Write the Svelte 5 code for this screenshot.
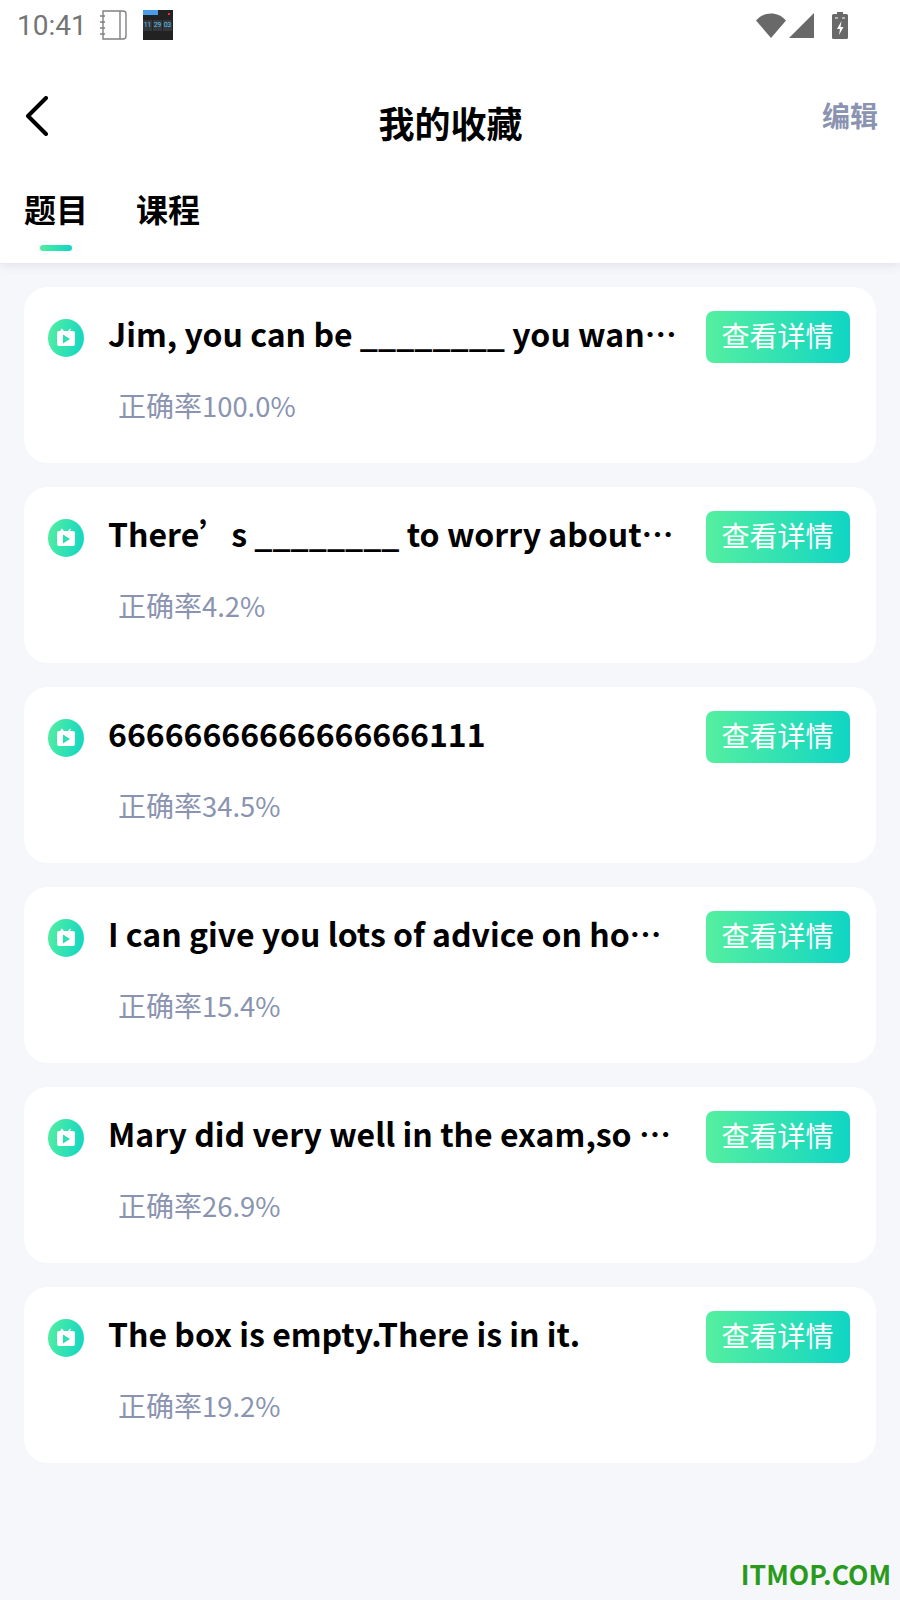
<script>
  const items = [
    { title: 'Jim, you can be ________ you want to be when you grow up.', rate: '100.0%' },
    { title: 'There’s ________ to worry about, everything is fine.', rate: '4.2%' },
    { title: '66666666666666666111', rate: '34.5%' },
    { title: 'I can give you lots of advice on how to learn English.', rate: '15.4%' },
    { title: 'Mary did very well in the exam,so her parents are happy.', rate: '26.9%' },
    { title: 'The box is empty.There is in it.', rate: '19.2%' }
  ];
</script>

<div class="page">
  <header class="top">
    <div class="status">
      <span class="time">10:41</span>
      <svg class="note" width="28" height="30" viewBox="0 0 28 30" fill="none" stroke="#808080" stroke-width="1.4">
        <path d="M3 1h20a3 3 0 0 1 3 3v22a3 3 0 0 1-3 3H3z" />
        <path d="M20 1v28M0 6h5M0 12h5M0 18h5M0 24h5" />
      </svg>
      <div class="clock">
        <div class="clock-top"><span class="clock-tag"></span><span class="clock-dot"></span></div>
        <div class="clock-nums"><span>11</span><span>29</span><span>03</span></div>
      </div>
      <div class="status-right">
        <svg width="30" height="26" viewBox="0 0 30 26"><path d="M0 8.500C8-1 22-1 30 8.500L15 26z" fill="#696969" /></svg>
        <svg width="25" height="25" viewBox="0 0 25 25"><path d="M25 0v25H0z" fill="#696969" /></svg>
        <svg class="battery" width="16" height="27" viewBox="0 0 16 27">
          <path d="M5 0h6v2h3.500a1.500 1.500 0 0 1 1.500 1.500v22a1.500 1.500 0 0 1-1.500 1.500h-13A1.500 1.500 0 0 1 0 25.500v-22A1.500 1.500 0 0 1 1.500 2H5z" fill="#696969" />
          <path d="M9.500 9l-4.500 8h3l-1 6 4.500-8H8.500z" fill="#fff" />
          <path d="M3 6h3M10 6h3" stroke="#fff" stroke-width="1.200" />
        </svg>
      </div>
    </div>

    <div class="nav">
      <svg class="back" width="24" height="40" viewBox="0 0 24 40" fill="none" stroke="#000" stroke-width="4" stroke-linecap="round" stroke-linejoin="round">
        <path d="M21 2L3 20l18 18" />
      </svg>
      <h1>我的收藏</h1>
      <span class="edit">编辑</span>
    </div>

    <div class="tabs">
      <div class="tab active">题目<i></i></div>
      <div class="tab">课程</div>
    </div>
  </header>

  <main class="list">
    {#each items as item}
      <section class="card">
        <div class="row">
          <span class="badge">
            <svg width="20" height="20" viewBox="0 0 20 20">
              <path d="M6 0.500l2 2.500h4l2-2.500 1 .8-1.400 1.700H17a2 2 0 0 1 2 2v11a2 2 0 0 1-2 2H3a2 2 0 0 1-2-2V5a2 2 0 0 1 2-2h1.400L5 1.300z" fill="#fff" />
              <path d="M7 6.500l7 4.500-7 4.500z" fill="#2adfb0" />
            </svg>
          </span>
          <span class="title">{item.title}</span>
          <button type="button" class="detail">查看详情</button>
        </div>
        <div class="rate">正确率<span class="pct">{item.rate}</span></div>
      </section>
    {/each}
  </main>

  <div class="mark">ITMOP.COM</div>
</div>

<style>
  :global(body) {
    margin: 0;
    background: #f5f7fb;
  }

  .page {
    position: relative;
    width: 900px;
    height: 1600px;
    overflow: hidden;
    background: #f5f7fb;
    font-family: "Noto Sans CJK SC", "Noto Sans", sans-serif;
  }

  .top {
    height: 263px;
    background: #fff;
    box-shadow: 0 2px 10px rgba(60, 70, 100, 0.12);
  }

  .status {
    display: flex;
    align-items: center;
    height: 50px;
    padding: 0 52px 0 17px;
  }

  .time {
    font-family: Roboto, sans-serif;
    font-size: 28px;
    color: #757575;
  }

  .note {
    margin-left: 13px;
  }

  .clock {
    display: flex;
    flex-direction: column;
    width: 30px;
    height: 30px;
    margin-left: 15px;
    background: #222;
  }

  .clock-top {
    display: flex;
    justify-content: space-between;
    align-items: flex-start;
    height: 10px;
  }

  .clock-tag {
    width: 15px;
    height: 5px;
    background: #4a9be8;
  }

  .clock-dot {
    width: 2px;
    height: 2px;
    margin: 3px 3px 0 0;
    background: #d33;
  }

  .clock-nums {
    display: flex;
    justify-content: space-between;
    font-family: Roboto, sans-serif;
    font-size: 7px;
    letter-spacing: -0.4px;
    line-height: 11px;
    color: #5cc4f0;
  }

  .clock-nums span {
    flex: 1;
    text-align: center;
    background: #33373b;
    margin-right: 1px;
  }

  .status-right {
    display: flex;
    align-items: center;
    gap: 3px;
    margin-left: auto;
  }

  .battery {
    margin-left: 15px;
  }

  .nav {
    display: grid;
    grid-template-columns: 1fr auto 1fr;
    align-items: center;
    height: 70px;
    padding: 0 24px 0 25px;
    margin-top: 37px;
  }

  .back {
    margin-top: -12px;
  }

  h1 {
    margin: 0;
    font-size: 36px;
    font-weight: 700;
    line-height: 50px;
    color: #000;
  }

  .edit {
    justify-self: end;
    font-size: 28px;
    font-weight: 700;
    line-height: 40px;
    color: #8a93b0;
    margin: -14px -2px 0 0;
  }

  .tabs {
    display: flex;
    gap: 48px;
    padding: 0 24px;
    margin-top: 28px;
  }

  .tab {
    position: relative;
    font-size: 32px;
    font-weight: 700;
    line-height: 46px;
    color: #000;
  }

  .tab i {
    position: absolute;
    left: 16px;
    top: 60px;
    width: 32px;
    height: 6px;
    border-radius: 3px;
    background: linear-gradient(90deg, #4deea0, #10d5c4);
  }

  .list {
    display: flex;
    flex-direction: column;
    gap: 24px;
    padding: 24px 24px 0;
  }

  .card {
    height: 176px;
    box-sizing: border-box;
    padding: 24px 26px 0 24px;
    background: #fff;
    border-radius: 24px;
  }

  .row {
    display: flex;
    align-items: flex-start;
  }

  .badge {
    display: flex;
    flex: none;
    align-items: center;
    justify-content: center;
    width: 36px;
    height: 38px;
    margin-top: 8px;
    border-radius: 50%;
    background: linear-gradient(100deg, #55efa0, #10d5c4);
  }

  .title {
    flex: none;
    width: 573px;
    margin-left: 24px;
    font-size: 32px;
    font-weight: 700;
    line-height: 44px;
    color: #000;
    white-space: nowrap;
    overflow: hidden;
    text-overflow: ellipsis;
  }

  .detail {
    flex: none;
    width: 144px;
    height: 52px;
    margin-left: auto;
    padding: 0 1px 4px 0;
    border: none;
    border-radius: 8px;
    background: linear-gradient(90deg, #55efa0, #10d5c4);
    color: #fff;
    font-family: inherit;
    font-size: 28px;
  }

  .rate {
    margin: 22px 0 0 70px;
    font-size: 28px;
    line-height: 40px;
    color: #8a94b0;
  }

  .pct {
    font-size: 27.400px;
  }

  .mark {
    position: absolute;
    right: 9px;
    bottom: 11px;
    font-size: 26.500px;
    font-weight: 700;
    line-height: 30px;
    color: #2a9a1c;
  }
</style>
